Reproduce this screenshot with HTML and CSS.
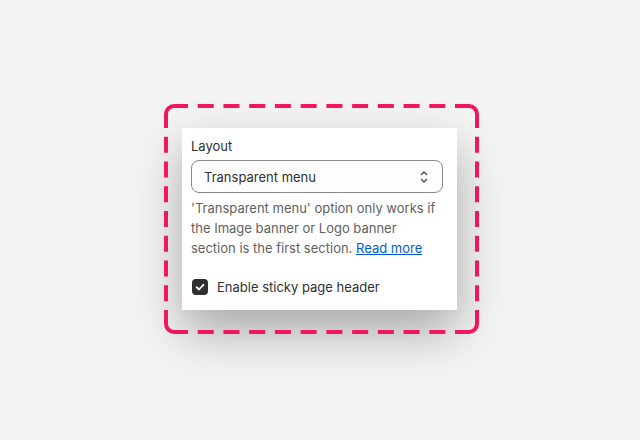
FILE: index.html
```html
<!DOCTYPE html>
<html lang="en">
<head>
<meta charset="utf-8">
<title>Header settings</title>
<link rel="stylesheet" href="styles.css">
</head>
<body>
  <div class="card">
    <svg class="dash-frame" viewBox="0 0 315 230" width="315" height="230" aria-hidden="true">
      <g fill="none" stroke="#f0175f" stroke-width="4">
        <path d="M2 24 V10 A8 8 0 0 1 10 2 H24"/>
        <path d="M291 2 H305 A8 8 0 0 1 313 10 V24"/>
        <path d="M313 206 V220 A8 8 0 0 1 305 228 H291"/>
        <path d="M24 228 H10 A8 8 0 0 1 2 220 V206"/>
        <path class="dash-h" d="M24 2 H291"/>
        <path class="dash-h" d="M24 228 H291"/>
        <path class="dash-v" d="M2 24 V206"/>
        <path class="dash-v" d="M313 24 V206"/>
      </g>
    </svg>
    <label class="label" for="layout">Layout</label>
    <div class="select" id="layout">
      <span class="select-value">Transparent menu</span>
      <svg class="select-icon" viewBox="0 0 10 16" width="10" height="16" aria-hidden="true">
        <path d="M2.5 5.5 L5 3 L7.5 5.5" fill="none" stroke="#4a4a4a" stroke-width="1.4" stroke-linecap="round" stroke-linejoin="round"/>
        <path d="M2.5 10.5 L5 13 L7.5 10.5" fill="none" stroke="#4a4a4a" stroke-width="1.4" stroke-linecap="round" stroke-linejoin="round"/>
      </svg>
    </div>
    <p class="help">'Transparent menu' option only works if the Image banner or Logo banner section is the first section. <a href="#" class="link">Read more</a></p>
    <div class="check-row">
      <span class="checkbox">
        <svg viewBox="0 0 16 16" width="16" height="16" aria-hidden="true">
          <path d="M4.6 8.2 L7 10.5 L11.4 5.8" fill="none" stroke="#ffffff" stroke-width="1.8" stroke-linecap="round" stroke-linejoin="round"/>
        </svg>
      </span>
      <span class="check-label">Enable sticky page header</span>
    </div>
  </div>
</body>
</html>
```

FILE: styles.css
```css
html, body {
  margin: 0;
  padding: 0;
}

body {
  width: 640px;
  height: 440px;
  background: #f3f3f3;
  display: flex;
  align-items: center;
  justify-content: center;
  font-family: Inter, "Noto Sans", sans-serif;
  font-size: 13px;
  color: #303030;
}

.card {
  position: relative;
  box-sizing: border-box;
  width: 275px;
  margin: 0 1px 2px 0;
  padding: 8px 14px 15px 9px;
  background: #ffffff;
  box-shadow: 0 22px 44px rgba(0, 0, 0, 0.3);
  display: flex;
  flex-direction: column;
}

.dash-frame {
  position: absolute;
  left: -18px;
  top: -24px;
  display: block;
  pointer-events: none;
}

.dash-h {
  stroke-dasharray: 16 9.73;
  stroke-dashoffset: 16;
}

.dash-v {
  stroke-dasharray: 16 8.75;
  stroke-dashoffset: 16;
}

.label {
  display: block;
  line-height: 20px;
  margin-bottom: 4px;
  color: #303030;
}

.select {
  box-sizing: border-box;
  height: 33px;
  border: 1px solid #8a8a8a;
  border-radius: 8px;
  display: flex;
  align-items: center;
  justify-content: space-between;
  padding: 0 13px 0 12px;
  background: #fdfdfd;
}

.select-value {
  color: #303030;
}

.select-icon {
  display: block;
}

.help {
  margin: 5px 0 0;
  line-height: 20px;
  color: #616161;
}

.link {
  color: #005bd3;
  text-decoration: underline;
}

.check-row {
  display: flex;
  align-items: center;
  gap: 9px;
  margin-top: 21px;
  height: 16px;
  padding-left: 1px;
}

.checkbox {
  width: 16px;
  height: 16px;
  border-radius: 4px;
  background: #303030;
  display: flex;
  align-items: center;
  justify-content: center;
}

.checkbox svg {
  display: block;
}

.check-label {
  color: #303030;
  line-height: 16px;
}
```
